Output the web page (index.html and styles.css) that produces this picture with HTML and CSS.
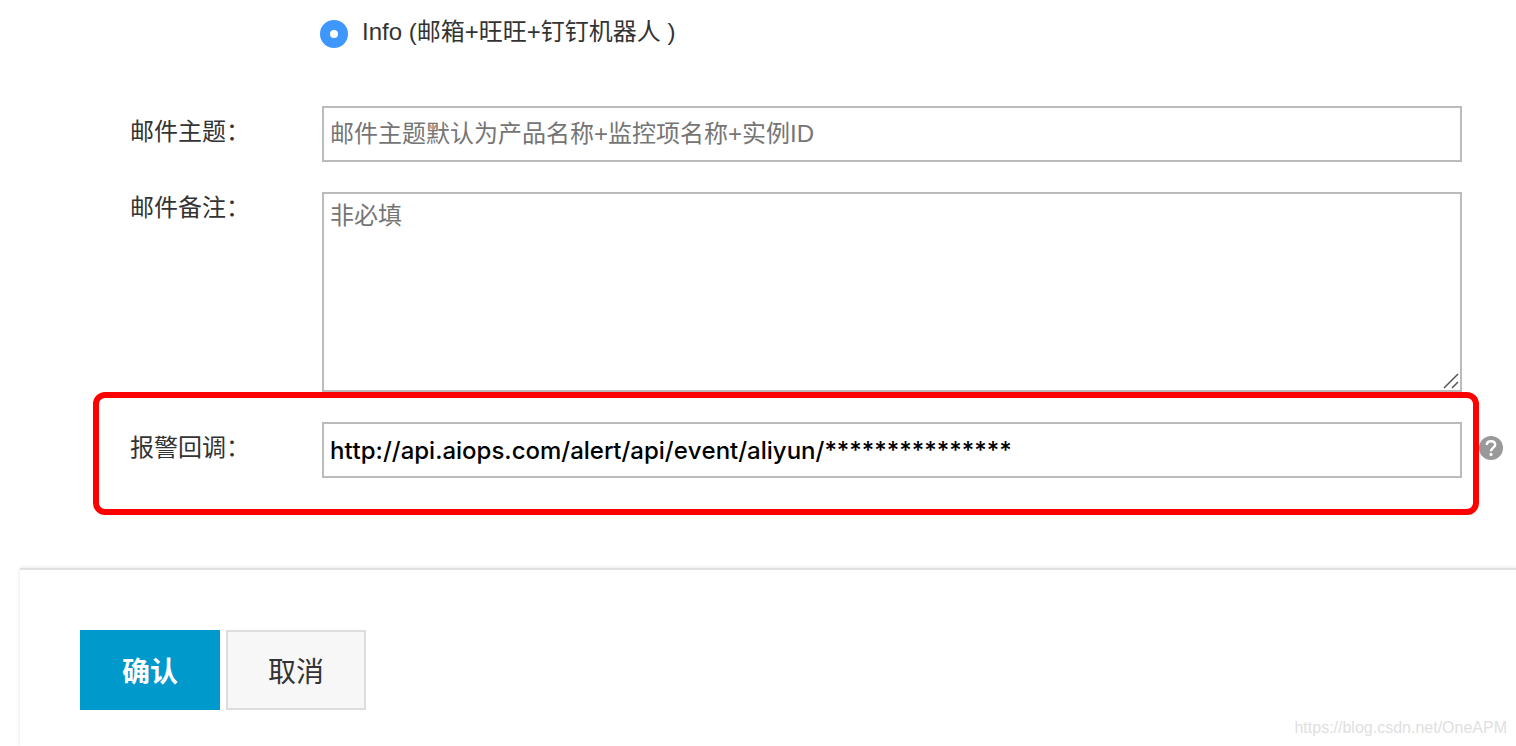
FILE: index.html
```html
<!DOCTYPE html>
<html lang="zh-CN">
<head>
    <meta charset="UTF-8">
    <title>报警通知</title>
    <link rel="stylesheet" href="styles.css">
</head>
<body>
    <form class="alarm">
        <div class="level">
            <input type="radio" id="info" name="level" checked>
            <label for="info">Info (邮箱+旺旺+钉钉机器人 )</label>
        </div>
        <div class="row">
            <label for="subject">邮件主题：</label>
            <input type="text" id="subject" placeholder="邮件主题默认为产品名称+监控项名称+实例ID">
        </div>
        <div class="row remark">
            <label for="remark">邮件备注：</label>
            <div class="area">
                <textarea id="remark" placeholder="非必填"></textarea>
                <svg class="grip" width="18" height="18" viewBox="0 0 18 18">
                    <path d="M2 16L16 2M10 16L16 10" fill="none" stroke="#555" stroke-width="1.5"/>
                </svg>
            </div>
        </div>
        <div class="callback">
            <div class="row mark">
                <label for="callback">报警回调：</label>
                <input type="text" id="callback" class="url" value="http://api.aiops.com/alert/api/event/aliyun/***************">
            </div>
            <svg class="help" width="24" height="24" viewBox="0 0 24 24">
                <circle cx="12" cy="12" r="12" fill="#999"/>
                <path d="M7.8 9C7.8 6.6 9.4 5.2 12 5.2S16.2 6.6 16.2 8.7C16.2 11.5 12 11.8 12 15.2" fill="none" stroke="#fff" stroke-width="2.4"/>
                <circle cx="12" cy="18.4" r="1.6" fill="#fff"/>
            </svg>
        </div>
        <div class="footer">
            <button type="submit" class="ok">确认</button>
            <button type="button" class="cancel">取消</button>
            <span class="watermark">https://blog.csdn.net/OneAPM</span>
        </div>
    </form>
</body>
</html>
```
FILE: styles.css
```css
*{
    margin:0;
    padding:0;
    box-sizing:border-box;
}
body{
    background-color:#FFF;
    color:#333;
    font-family:"Liberation Sans","Noto Sans CJK SC",sans-serif;
    font-size:24px;
    line-height:32px;
}
input,textarea,button{
    font-family:inherit;
    font-size:24px;
}
.alarm{
    display:flex;
    flex-direction:column;
    min-height:100vh;
}
.level{
    display:flex;
    align-items:center;
    gap:14px;
    margin:16px 0 58px 320px;
}
.level input{
    appearance:none;
    width:28px;
    height:28px;
    margin-top:4px;
    border:10px solid #3d97fc;
    border-radius:50%;
    background-color:#FFF;
}
.row{
    display:flex;
    align-items:flex-start;
    padding-left:130px;
    padding-right:54px;
    margin-bottom:30px;
}
.row label{
    flex:none;
    width:192px;
    padding-top:10px;
}
.row input,.row textarea{
    flex:1;
    min-width:0;
    height:56px;
    padding:0 6px;
    border:2px solid #bbb;
    color:#000;
    background-color:#FFF;
    outline:none;
}
.row ::placeholder{
    color:#757575;
}
.remark{
    margin-bottom:0;
}
.remark label{
    padding-top:0;
}
.area{
    position:relative;
    display:flex;
    flex:1;
}
.row textarea{
    height:200px;
    padding-top:6px;
    line-height:32px;
    resize:none;
}
.grip{
    position:absolute;
    right:2px;
    bottom:2px;
}
.callback{
    display:flex;
    align-items:center;
    margin:0 13px 53px 93px;
}
.mark{
    flex:1;
    margin-bottom:0;
    padding:24px 11px 31px 31px;
    border:6px solid #f00;
    border-radius:12px;
}
.row .url{
    font-family:Inter,sans-serif;
    font-weight:500;
    font-kerning:none;
}
.help{
    flex:none;
    margin-bottom:12px;
}
.footer{
    position:relative;
    display:flex;
    flex:1;
    align-items:flex-start;
    gap:6px;
    margin-left:20px;
    padding:60px 60px 36px;
    border-top:2px solid #e0e0e0;
    box-shadow:0 0 4px rgba(0,0,0,.12);
}
.footer button{
    width:140px;
    height:80px;
    font-size:28px;
}
.footer .ok{
    border:none;
    color:#FFF;
    background-color:#0099cc;
    font-weight:bold;
}
.footer .cancel{
    border:2px solid #ddd;
    color:#333;
    background-color:#f7f7f7;
}
.watermark{
    position:absolute;
    right:9px;
    bottom:8px;
    color:#e0e0e0;
    font-size:16px;
    line-height:20px;
}
```
